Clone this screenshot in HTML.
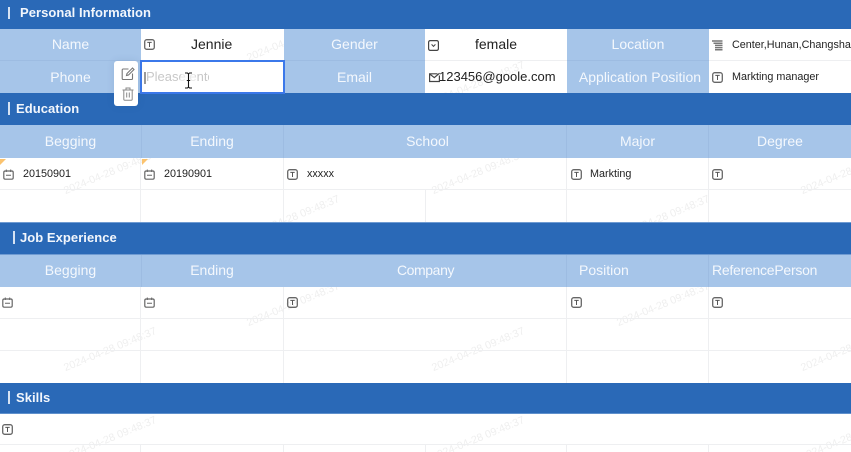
<!DOCTYPE html>
<html><head><meta charset="utf-8"><title>Resume</title>
<style>
html,body{margin:0;padding:0;background:#fff}
#p{position:relative;width:851px;height:452px;overflow:hidden;background:#fff;font-family:"Liberation Sans","Noto Sans CJK SC",sans-serif}
#p div,#p span,#p svg{position:absolute}
.wm{font-size:10.7px;color:#efefef;white-space:nowrap;transform-origin:0 100%;transform:rotate(-22.4deg);line-height:14px}
.band{left:0;width:851px;background:#2a69b7}
.hd{background:#a6c5e9}
.lb{color:#f4f8fd;font-size:14px;text-align:center;height:32px;line-height:32px;white-space:nowrap}
.bar{width:2px;background:#d5e2f3}
.tt{color:#f2f6fc;font-size:13px;font-weight:bold;line-height:16px;letter-spacing:.05px;white-space:nowrap}
.h{height:1px}
.v{width:1px}
.l1{background:#eeeff1}
.l2{background:#9dbce2}
.t{color:#222;white-space:nowrap;line-height:16px}
.s{font-size:10.8px}
.m{font-size:14px}
.ic{width:11px;height:11px}
</style></head>
<body><div id="p">
<svg width="0" height="0" style="left:0;top:0">
<defs>
<symbol id="T" viewBox="0 0 11 11"><rect x=".7" y=".7" width="9.6" height="9.6" rx="2" fill="none" stroke="#666" stroke-width="1.3"/><path d="M3.3 3.4H7.7M5.5 3.4V8" fill="none" stroke="#555" stroke-width="1"/></symbol>
<symbol id="C" viewBox="0 0 11 11"><rect x=".8" y="2" width="9.4" height="8.2" rx="1.4" fill="none" stroke="#666" stroke-width="1.2"/><path d="M3.3 .5V3M7.7 .5V3M3 6.2H8" fill="none" stroke="#666" stroke-width="1"/></symbol>
<symbol id="D" viewBox="0 0 11 11"><rect x=".6" y=".6" width="9.8" height="9.8" rx="1.6" fill="none" stroke="#444" stroke-width="1.2"/><path d="M3.6 4.4L5.5 6.4L7.4 4.4" fill="none" stroke="#444" stroke-width="1"/></symbol>
<symbol id="M" viewBox="0 0 11 11"><path d="M10.4 3.5V9.5H.6V1.8H8.5M.9 2.200L5.300 5.600L10.600 1.200" fill="none" stroke="#444" stroke-width="1.2"/></symbol>
<symbol id="L" viewBox="0 0 11 11"><path d="M0 1H10.500M1.500 3.200H10.500M3 5.400H10.500M3 7.600H10.500M3 9.800H10.500" fill="none" stroke="#777" stroke-width="1.500"/></symbol>
</defs>
</svg>

<!-- watermarks -->
<span class="wm" style="left:67px;top:184px">2024-04-28 09:48:37</span>
<span class="wm" style="left:435px;top:184px">2024-04-28 09:48:37</span>
<span class="wm" style="left:804px;top:184px">2024-04-28 09:48:37</span>
<span class="wm" style="left:250px;top:51px">2024-04-28 09:48:37</span>
<span class="wm" style="left:435px;top:95px">2024-04-28 09:48:37</span>
<span class="wm" style="left:250px;top:229px">2024-04-28 09:48:37</span>
<span class="wm" style="left:620px;top:229px">2024-04-28 09:48:37</span>
<span class="wm" style="left:250px;top:316px">2024-04-28 09:48:37</span>
<span class="wm" style="left:620px;top:316px">2024-04-28 09:48:37</span>
<span class="wm" style="left:67px;top:361px">2024-04-28 09:48:37</span>
<span class="wm" style="left:435px;top:361px">2024-04-28 09:48:37</span>
<span class="wm" style="left:804px;top:361px">2024-04-28 09:48:37</span>
<span class="wm" style="left:67px;top:450px">2024-04-28 09:48:37</span>
<span class="wm" style="left:435px;top:450px">2024-04-28 09:48:37</span>
<span class="wm" style="left:804px;top:450px">2024-04-28 09:48:37</span>

<!-- personal -->
<div class="band" style="top:0;height:29px"></div>
<div class="bar" style="left:8px;top:7px;height:12px"></div>
<div class="tt" style="left:20px;top:5px">Personal Information</div>
<div class="hd" style="left:0;top:29px;width:141px;height:64px"></div>
<div class="hd" style="left:284px;top:29px;width:141px;height:64px"></div>
<div class="hd" style="left:567px;top:29px;width:142px;height:64px"></div>
<div class="h l1" style="left:425px;top:60px;width:142px"></div>
<div class="h l1" style="left:709px;top:60px;width:142px"></div>
<div class="h l2" style="left:0;top:60px;width:141px"></div>
<div class="h l2" style="left:284px;top:60px;width:141px"></div>
<div class="h l2" style="left:567px;top:60px;width:142px"></div>
<div class="lb" style="left:0;top:28px;width:141px">Name</div>
<div class="lb" style="left:0;top:61px;width:141px">Phone</div>
<div class="lb" style="left:284px;top:28px;width:141px">Gender</div>
<div class="lb" style="left:284px;top:61px;width:141px">Email</div>
<div class="lb" style="left:567px;top:28px;width:142px">Location</div>
<div class="lb" style="left:569px;top:61px;width:142px">Application Position</div>

<svg class="ic" style="left:144px;top:39px"><use href="#T"/></svg>
<div class="t m" style="left:191px;top:36px">Jennie</div>
<svg class="ic" style="left:428px;top:40px"><use href="#D"/></svg>
<div class="t m" style="left:475px;top:36px">female</div>
<svg class="ic" style="left:429px;top:72px"><use href="#M"/></svg>
<div class="t" style="left:439px;top:69px;font-size:13px">123456@goole.com</div>
<svg class="ic" style="left:712px;top:40px"><use href="#L"/></svg>
<div class="t s" style="left:732px;top:37px">Center,Hunan,Changsha</div>
<svg class="ic" style="left:712px;top:72px"><use href="#T"/></svg>
<div class="t s" style="left:732px;top:69px">Markting manager</div>

<!-- input -->
<div style="left:140px;top:60px;width:145px;height:34px;border:2px solid #3b78ea;background:#fff;box-sizing:border-box"></div>
<div style="left:144px;top:72px;width:1.500px;height:12px;background:#999"></div>
<div style="left:146px;top:69px;width:63px;height:16px;overflow:hidden;color:#c8c8c8;font-size:13px;line-height:16px;white-space:nowrap">Please enter</div>
<div style="left:180px;top:71px;width:16px;height:16px;background:#fff;opacity:.6;border-radius:8px"></div>
<svg style="left:184px;top:72px" width="9" height="17" viewBox="0 0 9 17"><path d="M1 1H3.500L4.500 2L5.500 1H8M4.500 2V15M1 16H3.500L4.500 15L5.500 16H8M2.800 8.500H6.200" fill="none" stroke="#111" stroke-width="1.100"/></svg>

<!-- education -->
<div class="band" style="top:93px;height:32px;left:0;width:140px"></div>
<div class="band" style="top:93px;height:32px;left:285px;width:566px"></div>
<div class="band" style="top:94px;height:31px;left:140px;width:145px"></div>
<div class="bar" style="left:8px;top:102px;height:13px"></div>
<div class="tt" style="left:16px;top:101px">Education</div>
<div class="hd" style="left:0;top:125px;width:851px;height:33px"></div>
<div class="v l2" style="left:141px;top:125px;height:33px"></div>
<div class="v l2" style="left:283px;top:125px;height:33px"></div>
<div class="v l2" style="left:566px;top:125px;height:33px"></div>
<div class="v l2" style="left:708px;top:125px;height:33px"></div>
<div class="lb" style="left:0;top:125px;width:141px">Begging</div>
<div class="lb" style="left:141px;top:125px;width:142px">Ending</div>
<div class="lb" style="left:286px;top:125px;width:283px">School</div>
<div class="lb" style="left:567px;top:125px;width:141px">Major</div>
<div class="lb" style="left:709px;top:125px;width:142px">Degree</div>

<div class="h l1" style="left:0;top:189px;width:851px"></div>
<div class="v l1" style="left:140px;top:158px;height:64px"></div>
<div class="v l1" style="left:283px;top:158px;height:64px"></div>
<div class="v l1" style="left:425px;top:190px;height:32px"></div>
<div class="v l1" style="left:566px;top:158px;height:64px"></div>
<div class="v l1" style="left:708px;top:158px;height:64px"></div>
<div style="left:0;top:159px;width:0;height:0;border-top:6px solid #fbc36f;border-right:6px solid transparent"></div>
<div style="left:142px;top:159px;width:0;height:0;border-top:6px solid #fbc36f;border-right:6px solid transparent"></div>
<svg class="ic" style="left:3px;top:169px"><use href="#C"/></svg>
<div class="t s" style="left:23px;top:166px">20150901</div>
<svg class="ic" style="left:144px;top:169px"><use href="#C"/></svg>
<div class="t s" style="left:164px;top:166px">20190901</div>
<svg class="ic" style="left:287px;top:169px"><use href="#T"/></svg>
<div class="t s" style="left:307px;top:166px">xxxxx</div>
<svg class="ic" style="left:571px;top:169px"><use href="#T"/></svg>
<div class="t s" style="left:590px;top:166px">Markting</div>
<svg class="ic" style="left:712px;top:169px"><use href="#T"/></svg>

<!-- job -->
<div class="band" style="top:222px;height:32px;border-top:1px solid #6f9bd2;box-sizing:border-box"></div>
<div class="bar" style="left:13px;top:231px;height:13px"></div>
<div class="tt" style="left:20px;top:230px">Job Experience</div>
<div class="hd" style="left:0;top:254px;width:851px;height:33px;border-top:1px solid #6f9bd2;box-sizing:border-box"></div>
<div class="v l2" style="left:141px;top:255px;height:32px"></div>
<div class="v l2" style="left:566px;top:255px;height:32px"></div>
<div class="v l2" style="left:708px;top:255px;height:32px"></div>
<div class="lb" style="left:0;top:254px;width:141px">Begging</div>
<div class="lb" style="left:141px;top:254px;width:142px">Ending</div>
<div class="lb" style="left:284px;top:254px;width:283px;letter-spacing:-.4px">Company</div>
<div class="lb" style="left:579px;top:254px;text-align:left">Position</div>
<div class="lb" style="left:712px;top:254px;text-align:left;letter-spacing:-.25px">ReferencePerson</div>
<div class="h l1" style="left:0;top:318px;width:851px"></div>
<div class="h l1" style="left:0;top:350px;width:851px"></div>
<div class="v l1" style="left:140px;top:287px;height:96px"></div>
<div class="v l1" style="left:283px;top:287px;height:96px"></div>
<div class="v l1" style="left:566px;top:287px;height:96px"></div>
<div class="v l1" style="left:708px;top:287px;height:96px"></div>
<svg class="ic" style="left:2px;top:297px"><use href="#C"/></svg>
<svg class="ic" style="left:144px;top:297px"><use href="#C"/></svg>
<svg class="ic" style="left:287px;top:297px"><use href="#T"/></svg>
<svg class="ic" style="left:571px;top:297px"><use href="#T"/></svg>
<svg class="ic" style="left:712px;top:297px"><use href="#T"/></svg>

<!-- skills -->
<div class="band" style="top:383px;height:31px;border-bottom:1px solid #5f90cc;box-sizing:border-box"></div>
<div class="bar" style="left:8px;top:391px;height:13px"></div>
<div class="tt" style="left:16px;top:390px">Skills</div>
<svg class="ic" style="left:2px;top:424px"><use href="#T"/></svg>
<div class="h l1" style="left:0;top:444px;width:851px"></div>
<div class="v l1" style="left:140px;top:445px;height:7px"></div>
<div class="v l1" style="left:283px;top:445px;height:7px"></div>
<div class="v l1" style="left:425px;top:445px;height:7px"></div>
<div class="v l1" style="left:566px;top:445px;height:7px"></div>
<div class="v l1" style="left:708px;top:445px;height:7px"></div>

<!-- popup -->
<div style="left:114px;top:61px;width:24px;height:45px;background:#fff;border-radius:3px;box-shadow:0 0 8px rgba(40,70,120,.12)"></div>
<svg style="left:121px;top:67px" width="14" height="14" viewBox="0 0 14 14"><path d="M7.500 2H2.200A1 1 0 0 0 1.200 3V11.500A1 1 0 0 0 2.200 12.500H10.500A1 1 0 0 0 11.500 11.500V6.500" fill="none" stroke="#777" stroke-width="1.100"/><path d="M5.500 8.500L6 6.500L11.500 1L13 2.500L7.500 8Z" fill="none" stroke="#777" stroke-width="1.100"/></svg>
<svg style="left:122px;top:87px" width="12" height="14" viewBox="0 0 12 14"><path d="M.5 3H11.500M4 3V1H8V3M1.800 3V12.200A1 1 0 0 0 2.800 13.200H9.200A1 1 0 0 0 10.200 12.200V3M4.700 5.500V10.500M7.300 5.500V10.500" fill="none" stroke="#888" stroke-width="1"/></svg>
</div></body></html>
